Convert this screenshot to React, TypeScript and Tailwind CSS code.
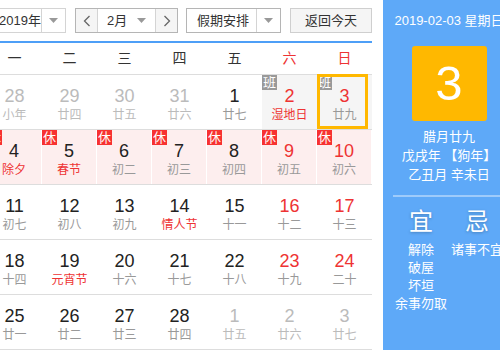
import React from 'react';

type Day = {
  n: number;
  l: string;
  dim?: boolean;
  red?: boolean;
  lred?: boolean;
  badge?: '班' | '休';
  gray?: boolean;
  sel?: boolean;
};

const weeks: { rest?: boolean; days: Day[] }[] = [
  {
    days: [
      { n: 28, l: '小年', dim: true },
      { n: 29, l: '廿四', dim: true },
      { n: 30, l: '廿五', dim: true },
      { n: 31, l: '廿六', dim: true },
      { n: 1, l: '廿七' },
      { n: 2, l: '湿地日', red: true, lred: true, badge: '班', gray: true },
      { n: 3, l: '廿九', red: true, badge: '班', gray: true, sel: true },
    ],
  },
  {
    rest: true,
    days: [
      { n: 4, l: '除夕', lred: true, badge: '休' },
      { n: 5, l: '春节', lred: true, badge: '休' },
      { n: 6, l: '初二', badge: '休' },
      { n: 7, l: '初三', badge: '休' },
      { n: 8, l: '初四', badge: '休' },
      { n: 9, l: '初五', red: true, badge: '休' },
      { n: 10, l: '初六', red: true, badge: '休' },
    ],
  },
  {
    days: [
      { n: 11, l: '初七' },
      { n: 12, l: '初八' },
      { n: 13, l: '初九' },
      { n: 14, l: '情人节', lred: true },
      { n: 15, l: '十一' },
      { n: 16, l: '十二', red: true },
      { n: 17, l: '十三', red: true },
    ],
  },
  {
    days: [
      { n: 18, l: '十四' },
      { n: 19, l: '元宵节', lred: true },
      { n: 20, l: '十六' },
      { n: 21, l: '十七' },
      { n: 22, l: '十八' },
      { n: 23, l: '十九', red: true },
      { n: 24, l: '二十', red: true },
    ],
  },
  {
    days: [
      { n: 25, l: '廿一' },
      { n: 26, l: '廿二' },
      { n: 27, l: '廿三' },
      { n: 28, l: '廿四' },
      { n: 1, l: '廿五', dim: true },
      { n: 2, l: '廿六', dim: true },
      { n: 3, l: '廿七', dim: true },
    ],
  },
];

const weekdays = ['一', '二', '三', '四', '五', '六', '日'];

function Caret() {
  return (
    <svg width="9" height="5" viewBox="0 0 9 5">
      <path d="M0 0h9L4.5 5z" fill="#999" />
    </svg>
  );
}

function Chevron({ dir }: { dir: 'l' | 'r' }) {
  return (
    <svg width="8" height="12" viewBox="0 0 8 12">
      <path
        d={dir === 'l' ? 'M6.5 1L1.5 6l5 5' : 'M1.5 1l5 5-5 5'}
        fill="none"
        stroke="#666"
        strokeWidth="1.3"
      />
    </svg>
  );
}

function Cell({ d, rest }: { d: Day; rest?: boolean }) {
  const numColor = d.dim ? 'text-[#bbb]' : d.red ? 'text-[#ee3333]' : 'text-[#222]';
  const lunarColor = d.dim ? 'text-[#bbb]' : d.lred ? 'text-[#ee3333]' : 'text-[#999]';
  return (
    <div
      className={`relative flex flex-col items-center pt-[10px] ${
        rest ? 'bg-[#fdeeee] border-r border-white' : d.gray ? 'bg-[#f5f5f5]' : ''
      }`}
    >
      <span className={`text-[18px] leading-[22px] ${numColor}`}>{d.n}</span>
      <span className={`text-[12px] leading-[16px] ${lunarColor}`}>{d.l}</span>
      {d.badge && (
        <span
          className={`absolute top-0 left-0 w-[15px] h-[15px] text-[13px] leading-[15px] text-center text-white ${
            d.badge === '休' ? 'bg-[#f73131]' : 'bg-[#999]'
          }`}
        >
          {d.badge}
        </span>
      )}
      {d.sel && (
        <span className="absolute -top-px left-0 right-[4px] bottom-0 border-[3px] border-[#ffb800]" />
      )}
    </div>
  );
}

export default function App() {
  return (
    <div className="w-[500px] h-[350px] overflow-hidden bg-white flex font-['Liberation_Sans','Noto_Sans_CJK_SC',sans-serif]">
      <div className="-ml-[13px] w-[385px] shrink-0 flex flex-col">
        {/* toolbar */}
        <div className="h-[43px] pt-[8px] flex items-start text-[13px] text-[#333]">
          <div className="w-[79px] h-[25px] border border-[#d4d4d4] flex">
            <span className="flex-1 pl-[11px] leading-[23px]">2019年</span>
            <span className="w-[24px] border-l border-[#d4d4d4] flex items-center justify-center">
              <Caret />
            </span>
          </div>
          <div className="ml-[9px] w-[103px] h-[25px] border border-[#b5b5b5] flex">
            <span className="w-[22px] bg-[#f5f5f5] border-r border-[#d4d4d4] flex items-center justify-center">
              <Chevron dir="l" />
            </span>
            <span className="flex-1 flex items-center pl-[9px] pr-[9px] justify-between">
              <span className="leading-[23px]">2月</span>
              <Caret />
            </span>
            <span className="w-[22px] bg-[#f5f5f5] border-l border-[#d4d4d4] flex items-center justify-center">
              <Chevron dir="r" />
            </span>
          </div>
          <div className="ml-[8px] w-[95px] h-[25px] border border-[#b5b5b5] flex">
            <span className="flex-1 pl-[10px] leading-[23px]">假期安排</span>
            <span className="w-[24px] border-l border-[#d4d4d4] flex items-center justify-center">
              <Caret />
            </span>
          </div>
          <div className="ml-[9px] w-[82px] h-[25px] border border-[#cfcfcf] bg-[#f5f5f5] text-center leading-[23px]">
            返回今天
          </div>
        </div>
        <div className="h-[2px] bg-[#4e9ff7]" />
        {/* weekday header */}
        <div className="h-[34px] grid grid-cols-[repeat(7,55px)] items-center border-b border-[#ddd] text-[14px]">
          {weekdays.map((w, i) => (
            <span key={w} className={`text-center ${i >= 5 ? 'text-[#ee3333]' : 'text-[#333]'}`}>
              {w}
            </span>
          ))}
        </div>
        {/* days */}
        {weeks.map((wk, i) => (
          <div key={i} className="h-[55px] grid grid-cols-[repeat(7,55px)] border-b border-[#ddd] shrink-0">
            {wk.days.map((d, j) => (
              <Cell key={j} d={d} rest={wk.rest} />
            ))}
          </div>
        ))}
      </div>

      {/* right panel */}
      <div className="ml-[11px] w-[132px] shrink-0 bg-[#5ea9f8] text-white flex flex-col items-center">
        <div className="mt-[12px] text-[13px] leading-[18px] whitespace-nowrap">2019-02-03 星期日</div>
        <div className="mt-[16px] w-[75px] h-[75px] rounded-[3px] bg-[#ffb800] flex items-center justify-center text-[49px] leading-none">
          3
        </div>
        <div className="mt-[6px] text-[13px] leading-[19px] text-center whitespace-nowrap">
          <div>腊月廿九</div>
          <div>戊戌年 【狗年】</div>
          <div>乙丑月 辛未日</div>
        </div>
        <div className="mt-[11px] self-stretch ml-[10px] h-[2px] bg-white/40" />
        <div className="self-stretch pl-[10px] flex text-center">
          <div className="w-[56px]">
            <div className="mt-[10px] text-[24px] leading-[30px] [text-shadow:0_1px_3px_rgba(0,0,0,0.25)]">宜</div>
            <div className="mt-[4px] text-[13px] leading-[18px] whitespace-nowrap">
              <div>解除</div>
              <div>破屋</div>
              <div>坏垣</div>
              <div>余事勿取</div>
            </div>
          </div>
          <div className="w-[56px]">
            <div className="mt-[10px] text-[24px] leading-[30px] [text-shadow:0_1px_3px_rgba(0,0,0,0.25)]">忌</div>
            <div className="mt-[4px] text-[13px] leading-[18px] whitespace-nowrap">
              <div>诸事不宜</div>
            </div>
          </div>
        </div>
      </div>
    </div>
  );
}
